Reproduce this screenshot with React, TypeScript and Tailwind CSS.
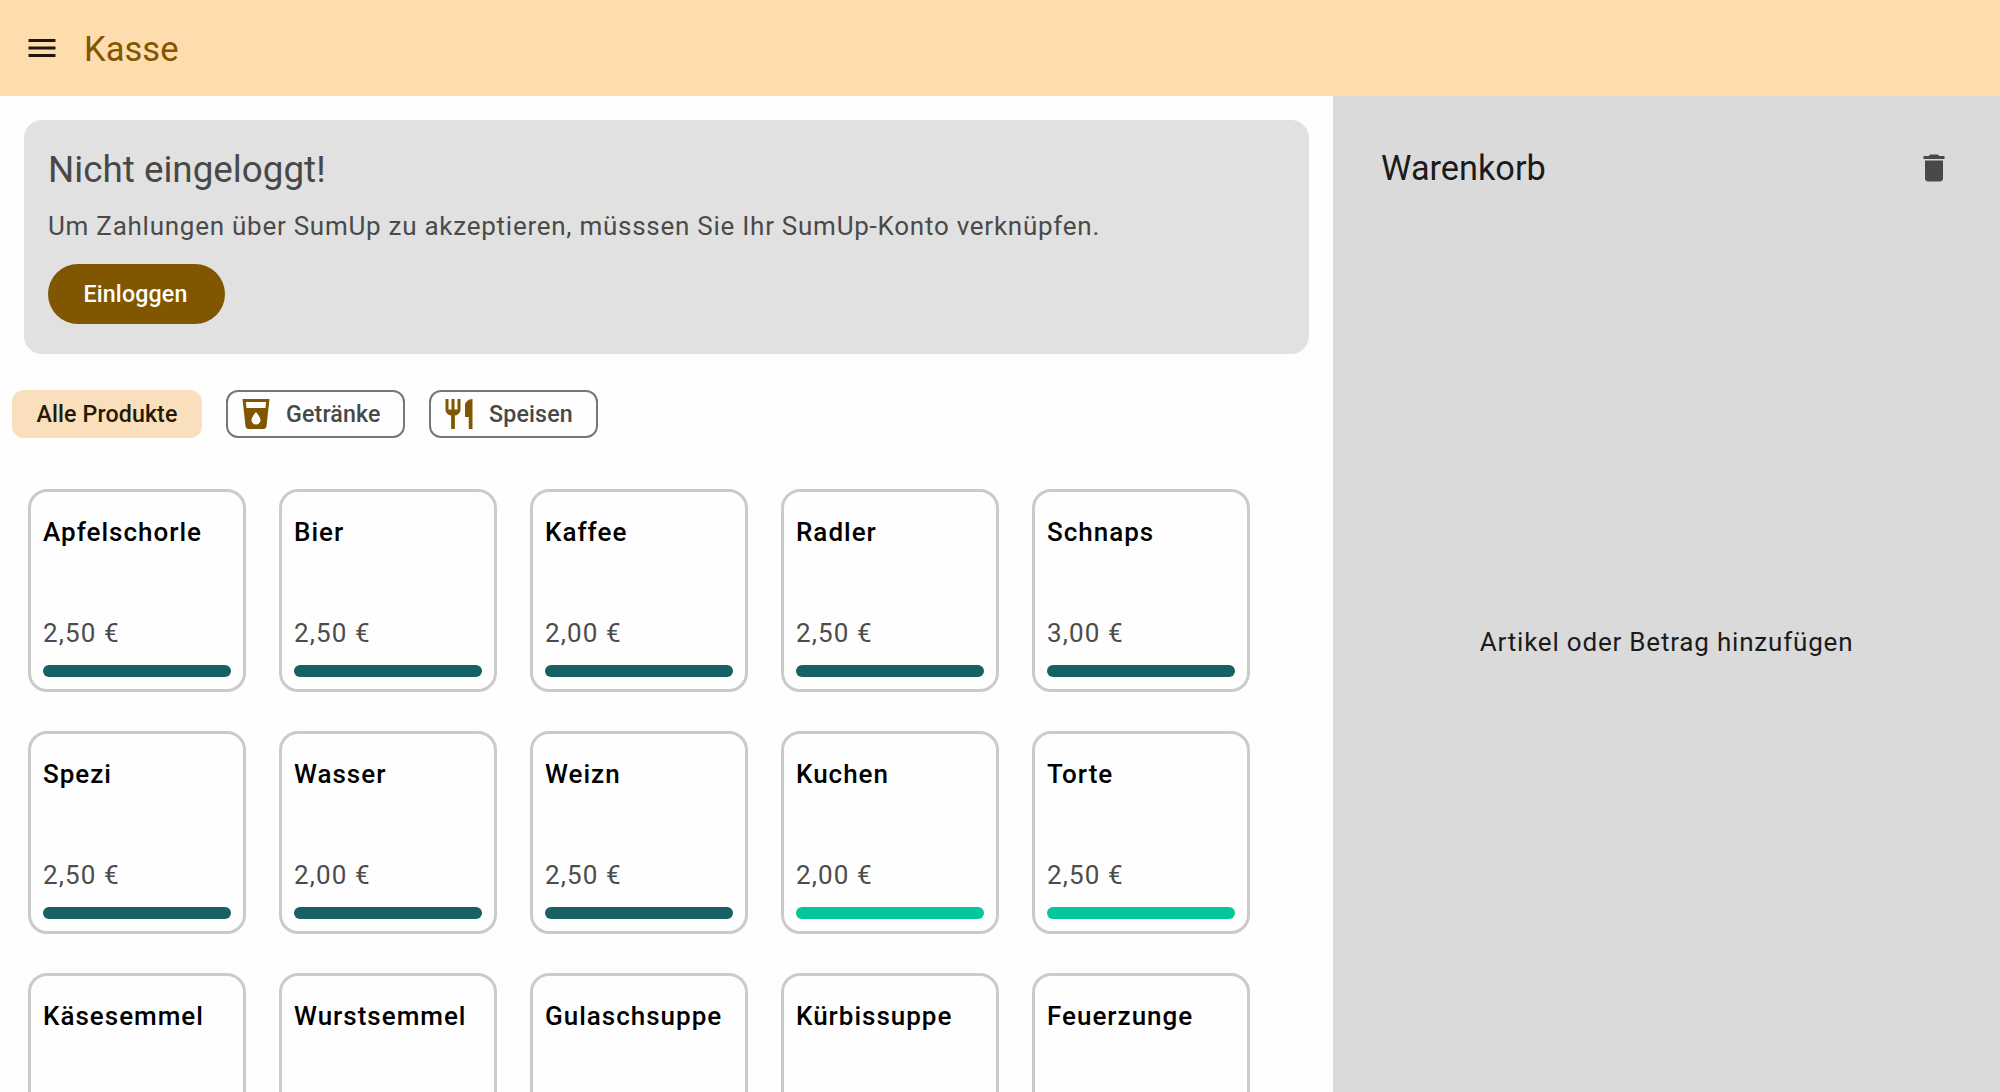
import type { ReactNode } from "react";
import { MdDelete, MdLocalDrink, MdMenu, MdRestaurant } from "react-icons/md";

type Product = { name: string; price?: string; kind: "drink" | "food" };

const products: Product[] = [
  { name: "Apfelschorle", price: "2,50 €", kind: "drink" },
  { name: "Bier", price: "2,50 €", kind: "drink" },
  { name: "Kaffee", price: "2,00 €", kind: "drink" },
  { name: "Radler", price: "2,50 €", kind: "drink" },
  { name: "Schnaps", price: "3,00 €", kind: "drink" },
  { name: "Spezi", price: "2,50 €", kind: "drink" },
  { name: "Wasser", price: "2,00 €", kind: "drink" },
  { name: "Weizn", price: "2,50 €", kind: "drink" },
  { name: "Kuchen", price: "2,00 €", kind: "food" },
  { name: "Torte", price: "2,50 €", kind: "food" },
  { name: "Käsesemmel", kind: "food" },
  { name: "Wurstsemmel", kind: "food" },
  { name: "Gulaschsuppe", kind: "food" },
  { name: "Kürbissuppe", kind: "food" },
  { name: "Feuerzunge", kind: "food" },
];

function ProductCard({ name, price, kind }: Product) {
  return (
    <button className="flex h-[203px] flex-col rounded-[19px] border-[3px] border-[#cbcbcb] px-3 pt-[22px] pb-3 text-left">
      <span className="text-[26px] leading-9 font-medium tracking-[1px] whitespace-nowrap text-black">{name}</span>
      {price && <span className="mt-auto text-[26px] leading-9 tracking-[1.1px] text-[#4c4c4c]">{price}</span>}
      {price && (
        <span
          className={`mt-3.5 h-3 w-full shrink-0 rounded-full ${kind === "drink" ? "bg-[#176064]" : "bg-[#04c69b]"}`}
        />
      )}
    </button>
  );
}

function FilterChip({ icon, label, width }: { icon: ReactNode; label: string; width: string }) {
  return (
    <button
      className={`flex h-12 items-center gap-3 rounded-xl border-2 border-[#777777] pl-2.5 text-[23.2px] font-medium tracking-[0.16px] text-[#484848] ${width}`}
    >
      {icon}
      {label}
    </button>
  );
}

export default function App() {
  return (
    <div className="flex h-[1092px] w-[2000px] flex-col overflow-hidden bg-[#fefefe] font-[Roboto,sans-serif]">
      <header className="flex h-24 shrink-0 items-center bg-[#ffdcae] pl-6">
        <MdMenu className="size-9 text-[#20180c]" />
        <h1 className="mt-0.5 ml-6 text-[34.6px] leading-[48px] text-[#805600]">Kasse</h1>
      </header>

      <div className="flex min-h-0 flex-1">
        <main className="min-w-0 flex-1">
          <section className="mx-6 mt-6 flex h-[234px] flex-col items-start rounded-[18px] bg-[#e1e1e1] px-6 pt-[26px]">
            <h2 className="text-[36.8px] leading-[48px] text-[#484848]">Nicht eingeloggt!</h2>
            <p className="mt-3.5 text-[26px] leading-9 tracking-[0.74px] whitespace-nowrap text-[#4a4a4a]">
              Um Zahlungen über SumUp zu akzeptieren, müsssen Sie Ihr SumUp-Konto verknüpfen.
            </p>
            <button className="mt-5 h-[60px] w-[177px] rounded-full bg-[#805600] pr-0.5 text-[23.2px] font-medium tracking-[0.16px] text-white">
              Einloggen
            </button>
          </section>

          <div className="mt-9 flex gap-6 pl-3">
            <button className="h-12 w-[190px] rounded-xl bg-[#f9dfbc] text-[23.2px] font-medium tracking-[0.12px] text-[#271905]">
              Alle Produkte
            </button>
            <FilterChip icon={<MdLocalDrink className="size-9 text-[#805600]" />} label="Getränke" width="w-[179px]" />
            <FilterChip icon={<MdRestaurant className="size-9 text-[#805600]" />} label="Speisen" width="w-[169px]" />
          </div>

          <div className="mt-[51px] ml-7 grid grid-cols-[repeat(5,218px)] gap-x-[33px] gap-y-[39px]">
            {products.map((product) => (
              <ProductCard key={product.name} {...product} />
            ))}
          </div>
        </main>

        <aside className="flex w-[667px] shrink-0 flex-col bg-[#dadada] pt-12">
          <div className="flex h-12 shrink-0 items-center justify-between pr-12 pl-12">
            <h2 className="text-[34.3px] leading-[48px] text-[#1b1b1b]">Warenkorb</h2>
            <MdDelete className="size-9 text-[#484848]" />
          </div>
          <p className="flex flex-1 items-center justify-center text-[26px] leading-9 tracking-[0.8px] text-[#1b1b1b]">
            Artikel oder Betrag hinzufügen
          </p>
        </aside>
      </div>
    </div>
  );
}
